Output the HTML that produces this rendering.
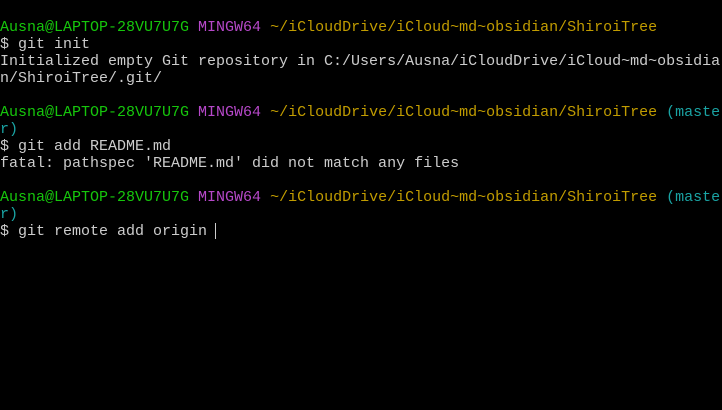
<!DOCTYPE html>
<html><head><meta charset="utf-8"><style>
html,body{margin:0;padding:0;background:#000;width:722px;height:410px;overflow:hidden}
pre{margin:0;padding:19px 0 0 0;font-family:"Liberation Mono",monospace;font-size:15px;line-height:17px;color:#cccccc;white-space:pre}
.g{color:#16c60c}.m{color:#b648c9}.y{color:#c19c00}.c{color:#1aa3a3}
.cur{display:inline-block;width:1px;height:16px;background:#ccc;vertical-align:-4px;margin-left:8px}
</style></head><body><pre><span class="g">Ausna@LAPTOP-28VU7U7G</span> <span class="m">MINGW64</span> <span class="y">~/iCloudDrive/iCloud~md~obsidian/ShiroiTree</span>
$ git init
Initialized empty Git repository in C:/Users/Ausna/iCloudDrive/iCloud~md~obsidia
n/ShiroiTree/.git/

<span class="g">Ausna@LAPTOP-28VU7U7G</span> <span class="m">MINGW64</span> <span class="y">~/iCloudDrive/iCloud~md~obsidian/ShiroiTree</span> <span class="c">(maste
r)</span>
$ git add README.md
fatal: pathspec 'README.md' did not match any files

<span class="g">Ausna@LAPTOP-28VU7U7G</span> <span class="m">MINGW64</span> <span class="y">~/iCloudDrive/iCloud~md~obsidian/ShiroiTree</span> <span class="c">(maste
r)</span>
$ git remote add origin<span class="cur"></span></pre></body></html>
